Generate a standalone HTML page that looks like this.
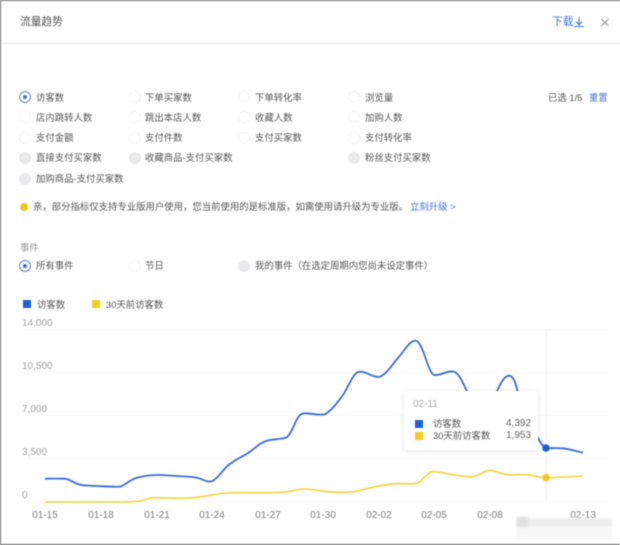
<!DOCTYPE html>
<html lang="zh">
<head>
<meta charset="utf-8">
<title>流量趋势</title>
<style>
html,body{margin:0;padding:0;background:#fff}
body{width:620px;height:545px;overflow:hidden;position:relative;font-family:"Liberation Sans","Noto Sans CJK SC",sans-serif}
#p{position:absolute;left:0;top:0;width:620px;height:545px;filter:blur(.45px);overflow:hidden}
.t{position:absolute;white-space:nowrap;font-size:9.4px;line-height:14px;color:#555}
.r{position:absolute;width:10px;height:10px;border:1px solid #f3f3f3;border-radius:50%;background:#fff}
.d{background:#e9eaec;border-color:#e9eaec}
.c{border-color:#5f84d8}
.c:after{content:"";position:absolute;left:3px;top:3px;width:4px;height:4px;border-radius:50%;background:#3d6fd8}
.b{color:#3f73d8}
.a{position:absolute;font-size:10px;line-height:12px;color:#a2a2a2;white-space:nowrap}
.x{color:#7d7d7d;width:40px;text-align:center;margin-left:-20px}
</style>
</head>
<body>
<div id="p">
<div style="position:absolute;left:0;top:0;width:620px;height:1px;background:#666"></div>
<div style="position:absolute;left:0;top:0;width:1px;height:545px;background:#666"></div>
<div style="position:absolute;left:0;top:544px;width:620px;height:1px;background:#555"></div>
<div style="position:absolute;left:1px;top:43px;width:619px;height:1px;background:#e8e8e8"></div>

<div class="t" style="left:20px;top:15px;font-size:10.7px;color:#555">流量趋势</div>
<div class="t b" style="left:552px;top:15px;font-size:10.7px">下载</div>
<svg style="position:absolute;left:574px;top:16px" width="11" height="12" viewBox="0 0 11 12"><path d="M5 1V9M2 5.500L5 9L8 5.500M0 10.500H10" fill="none" stroke="#3f73d8" stroke-width="1"/></svg>
<svg style="position:absolute;left:600px;top:18px" width="10" height="10" viewBox="0 0 10 10"><path d="M1.500 1L8.500 8M8.500 1L1.500 8" stroke="#9a9a9a" stroke-width="1.200"/></svg>

<span class="r c" style="left:19px;top:91px"></span><div class="t" style="left:36px;top:90.500px">访客数</div>
<span class="r" style="left:129px;top:91px"></span><div class="t" style="left:145px;top:90.500px">下单买家数</div>
<span class="r" style="left:238px;top:91px"></span><div class="t" style="left:255px;top:90.500px">下单转化率</div>
<span class="r" style="left:348px;top:91px"></span><div class="t" style="left:365px;top:90.500px">浏览量</div>
<div class="t" style="left:548px;top:90.500px">已选 1/5</div><div class="t b" style="left:589px;top:90.500px">重置</div>

<span class="r" style="left:19px;top:111px"></span><div class="t" style="left:36px;top:110.500px">店内跳转人数</div>
<span class="r" style="left:129px;top:111px"></span><div class="t" style="left:145px;top:110.500px">跳出本店人数</div>
<span class="r" style="left:238px;top:111px"></span><div class="t" style="left:255px;top:110.500px">收藏人数</div>
<span class="r" style="left:348px;top:111px"></span><div class="t" style="left:365px;top:110.500px">加购人数</div>

<span class="r" style="left:19px;top:132px"></span><div class="t" style="left:36px;top:131px">支付金额</div>
<span class="r" style="left:129px;top:132px"></span><div class="t" style="left:145px;top:131px">支付件数</div>
<span class="r" style="left:238px;top:132px"></span><div class="t" style="left:255px;top:131px">支付买家数</div>
<span class="r" style="left:348px;top:132px"></span><div class="t" style="left:365px;top:131px">支付转化率</div>

<span class="r d" style="left:19px;top:152px"></span><div class="t" style="left:36px;top:151px">直接支付买家数</div>
<span class="r d" style="left:129px;top:152px"></span><div class="t" style="left:145px;top:151px">收藏商品-支付买家数</div>
<span class="r d" style="left:348px;top:152px"></span><div class="t" style="left:365px;top:151px">粉丝支付买家数</div>

<span class="r d" style="left:19px;top:173px"></span><div class="t" style="left:36px;top:172px">加购商品-支付买家数</div>

<span style="position:absolute;left:20px;top:203px;width:8px;height:8px;border-radius:50%;background:#f3c41f"></span>
<div class="t" style="left:33px;top:200px">亲，部分指标仅支持专业版用户使用，您当前使用的是标准版，如需使用请升级为专业版。<span class="b" style="margin-left:2px">立刻升级 &gt;</span></div>

<div class="t" style="left:20px;top:241px;color:#999">事件</div>
<span class="r c" style="left:19px;top:260px"></span><div class="t" style="left:36px;top:258.500px">所有事件</div>
<span class="r" style="left:129px;top:260px"></span><div class="t" style="left:145px;top:258.500px">节日</div>
<span class="r d" style="left:238px;top:260px"></span><div class="t" style="left:255px;top:258.500px">我的事件（在选定周期内您尚未设定事件）</div>

<span style="position:absolute;left:23px;top:300px;width:8px;height:8px;background:#1f5fd8"></span>
<div class="t" style="left:37px;top:297.500px">访客数</div>
<span style="position:absolute;left:92px;top:300px;width:8px;height:8px;background:#f0cf1e"></span>
<div class="t" style="left:106px;top:297.500px">30天前访客数</div>

<div class="a" style="left:22px;top:318px">14,000</div>
<div class="a" style="left:22px;top:361px">10,500</div>
<div class="a" style="left:22px;top:404px">7,000</div>
<div class="a" style="left:22px;top:447px">3,500</div>
<div class="a" style="left:22px;top:490px">0</div>

<svg style="position:absolute;left:0;top:0" width="620" height="545" viewBox="0 0 620 545">
<g stroke="#f8f8f8" stroke-width="1">
<path d="M22 329.500H608M22 372.500H608M22 415.500H608M22 458.500H608M22 501.500H608"/>
<path d="M546.500 329V502" stroke="#f0f0f0"/>
</g>
<path d="M45 478.700C52 478.700 58 478.500 65 478.700C71 479.500 74 483.500 80 484.700C86 485.800 91 485.800 97 486C105 486.400 112 486.900 120 486.700C127 484 130 479.500 137 477.700C144 476 150 475 157 475C164 475 170 475.600 177 476C184 476.400 188 476.500 195 477.300C202 478.500 206 482.500 212 481.300C220 477 223 468 231 463.300C238 458 243 456.500 250 451.700C256 447.500 260 442.500 267 440.700C274 438.800 281 439.500 287 437.300C294 431 296 413.500 304 413.300C310 413.200 318 415.500 325 414.300C332 410 337 403 343 395C349 386 353 372 360 371.700C367 371.500 373 378 380 376.700C387 373.500 391 366 398 358C405 350 410 340 416 340.700C423 342 428 373 434 375C441 376 447 370 454 371.700C460 374 463 384 468 393C475 408 487 408 497 391C500 385 504 375.700 509 375.700C514 375.700 516 385 518 393C522 407 532 428 538 438C541 443 543 447 546 448C552 448.500 557 447.800 563 448.300C570 449.200 576 451 583 452.700" fill="none" stroke="#3d6bd6" stroke-width="1.800" stroke-linejoin="round"/>
<path d="M45 502H120C128 502 134 502 140 501C146 500 148 498 153 497.700C161 497.400 169 498.500 177 498.300C184 498.100 190 498.200 197 497.300C207 496 216 493.800 227 493C242 492.400 258 493 273 492.700C280 492.500 284 492.200 290 491.300C296 490.200 299 489 305 489C316 489.500 325 492 337 492.300C344 492.500 350 492.400 357 491C365 489.500 372 487 380 485.700C386 484.700 391 484 397 483.700C404 483.400 411 484.500 417 483.300C423 481 427 472 433 471.700C440 471.500 446 473.800 453 474.700C460 475.700 466 477.300 473 476.700C480 475.500 484 470.300 490 470.300C496 470.300 500 474 507 474.700C514 475.200 520 474.200 527 474.700C534 475.300 539 477.800 546 477.700C552 477.700 557 477.300 563 477C570 476.700 576 476.300 583 476" fill="none" stroke="#f1d43a" stroke-width="1.600" stroke-linejoin="round"/>
<circle cx="546" cy="448" r="3.800" fill="#1f5fd8"/>
<circle cx="546" cy="477.700" r="3.800" fill="#f3cb1e"/>
</svg>

<div style="position:absolute;left:404px;top:391px;width:134px;height:59px;background:#fff;box-shadow:0 1px 5px rgba(0,0,0,.12)"></div>
<div class="a" style="left:413px;top:399px;color:#aaa">02-11</div>
<span style="position:absolute;left:415px;top:420px;width:8px;height:8px;background:#1f5fd8"></span>
<div class="t" style="left:433px;top:417px">访客数</div>
<div class="a" style="left:506px;top:418px;color:#666">4,392</div>
<span style="position:absolute;left:415px;top:432px;width:8px;height:8px;background:#f3cb1e"></span>
<div class="t" style="left:433px;top:429px">30天前访客数</div>
<div class="a" style="left:506px;top:430px;color:#666">1,953</div>

<div class="a x" style="left:45px;top:509.500px">01-15</div>
<div class="a x" style="left:101px;top:509.500px">01-18</div>
<div class="a x" style="left:157px;top:509.500px">01-21</div>
<div class="a x" style="left:212px;top:509.500px">01-24</div>
<div class="a x" style="left:268px;top:509.500px">01-27</div>
<div class="a x" style="left:323px;top:509.500px">01-30</div>
<div class="a x" style="left:379px;top:509.500px">02-02</div>
<div class="a x" style="left:434px;top:509.500px">02-05</div>
<div class="a x" style="left:490px;top:509.500px">02-08</div>
<div class="a x" style="left:583px;top:509.500px">02-13</div>

<div style="position:absolute;left:516px;top:518px;width:96px;height:9px;background:#eeeeee;filter:blur(1.200px)"></div>
<div style="position:absolute;left:516px;top:527px;width:96px;height:13px;background:#f6f6f6;filter:blur(1.200px)"></div>
<div style="position:absolute;left:517px;top:517px;width:11px;height:10px;background:#e0e0e0;filter:blur(1.200px)"></div>
</div>
</body>
</html>
